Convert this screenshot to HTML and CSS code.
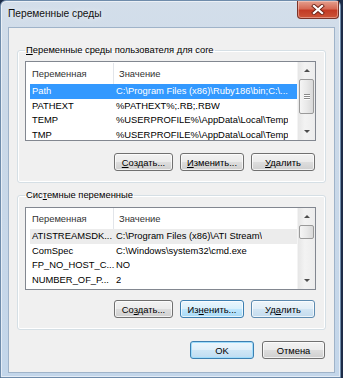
FILE: index.html
```
<!DOCTYPE html>
<html lang="ru">
<head>
    <meta charset="UTF-8">
    <meta name="viewport" content="width=device-width, initial-scale=1.0">
    <link rel="stylesheet" href="styles.css">
    <title>Переменные среды</title>
</head>
<body>

<div class="window">
    <div class="titlebar">
        <span class="title">Переменные среды</span>
        <button class="close" type="button">
            <svg width="14" height="11" viewBox="0 0 14 11">
                <path d="M3 2 L11 9 M11 2 L3 9" stroke="#6a2116" stroke-width="4" stroke-linecap="square"/>
                <path d="M3 2 L11 9 M11 2 L3 9" stroke="#fff" stroke-width="2.3" stroke-linecap="square"/>
            </svg>
        </button>
    </div>

    <div class="client">
        <!-- user variables -->
        <fieldset class="group group-user">
            <legend><u>П</u>еременные среды пользователя для core</legend>
            <div class="list list-user">
                <div class="list-body">
                    <div class="list-head">
                        <span class="col1">Переменная</span>
                        <span class="col2">Значение</span>
                    </div>
                    <div class="row selected"><span class="col1">Path</span><span class="col2">C:\Program Files (x86)\Ruby186\bin;C:\...</span></div>
                    <div class="row"><span class="col1">PATHEXT</span><span class="col2">%PATHEXT%;.RB;.RBW</span></div>
                    <div class="row"><span class="col1">TEMP</span><span class="col2">%USERPROFILE%\AppData\Local\Temp</span></div>
                    <div class="row"><span class="col1">TMP</span><span class="col2">%USERPROFILE%\AppData\Local\Temp</span></div>
                </div>
                <div class="scrollbar">
                    <span class="arrow up"></span>
                    <div class="track"><div class="thumb thumb-user"><i></i><i></i><i></i></div></div>
                    <span class="arrow down"></span>
                </div>
            </div>
            <div class="actions">
                <button class="btn btn-new" type="button"><u>С</u>оздать...</button>
                <button class="btn btn-edit" type="button"><u>И</u>зменить...</button>
                <button class="btn btn-del" type="button"><u>У</u>далить</button>
            </div>
        </fieldset>

        <!-- system variables -->
        <fieldset class="group group-sys">
            <legend>Сис<u>т</u>емные переменные</legend>
            <div class="list list-sys">
                <div class="list-body">
                    <div class="list-head">
                        <span class="col1">Переменная</span>
                        <span class="col2">Значение</span>
                    </div>
                    <div class="row inactive"><span class="col1">ATISTREAMSDK...</span><span class="col2">C:\Program Files (x86)\ATI Stream\</span></div>
                    <div class="row"><span class="col1">ComSpec</span><span class="col2">C:\Windows\system32\cmd.exe</span></div>
                    <div class="row"><span class="col1">FP_NO_HOST_C...</span><span class="col2">NO</span></div>
                    <div class="row"><span class="col1">NUMBER_OF_P...</span><span class="col2">2</span></div>
                </div>
                <div class="scrollbar">
                    <span class="arrow up"></span>
                    <div class="track"><div class="thumb thumb-sys"></div></div>
                    <span class="arrow down"></span>
                </div>
            </div>
            <div class="actions">
                <button class="btn btn-new" type="button">Со<u>з</u>дать...</button>
                <button class="btn btn-edit hover" type="button">Из<u>н</u>енить...</button>
                <button class="btn btn-del fading" type="button">Уд<u>а</u>лить</button>
            </div>
        </fieldset>

        <div class="dialog-actions">
            <button class="btn btn-ok default" type="button">OK</button>
            <button class="btn btn-cancel" type="button">Отмена</button>
        </div>
    </div>
</div>

</body>
</html>
```

FILE: styles.css
```
body {
    margin: 0;
    background-color: #1d2c48;
    font-family: 'Liberation Sans', Arial, sans-serif;
    font-size: 9.4px;
    color: #000;
}

.window {
    width: 339px;
    height: 376px;
    border: 1px solid #6f8cab;
    border-radius: 6px 6px 0 0;
    background: linear-gradient(180deg, #d3deea 0%, #cbd9e8 30%, #c3d6ea 100%);
    box-shadow: inset 0 0 0 1px rgba(255, 255, 255, 0.55);
    display: flex;
    flex-direction: column;
}

.titlebar {
    height: 26px;
    display: flex;
    align-items: flex-start;
    justify-content: space-between;
}

.title {
    font-size: 10.2px;
    color: #111;
    padding: 7px 0 0 7px;
    text-shadow: 0 0 6px rgba(255, 255, 255, 0.9);
}

.close {
    width: 42px;
    height: 18px;
    margin: 0 1px 0 0;
    padding: 0;
    border: 1px solid #7a3328;
    border-top: none;
    border-radius: 0 0 4px 4px;
    background: linear-gradient(180deg, #e4a08f 0%, #d66a55 45%, #c33b25 55%, #cc5538 100%);
    box-shadow: inset 0 0 0 1px rgba(255, 220, 210, 0.45);
    display: flex;
    align-items: center;
    justify-content: center;
}

.client {
    width: 327px;
    height: 346px;
    margin: 0 4px 0 7px;
    border: 1px solid #9fb3c9;
    background-color: #f0f0f0;
    padding: 14px 8px 0 8px;
    box-sizing: border-box;
}

.group {
    margin: 0;
    border: 1px solid #d5dfe5;
    border-radius: 3px;
    box-shadow: inset 0 0 0 1px #fff;
    padding: 3px 9px 11px 7px;
}

.group legend {
    padding: 0 1px;
    margin-left: 0;
    line-height: 16px;
}

.group-sys {
    margin-top: 4px;
    padding-top: 4px;
}

u {
    text-decoration-thickness: 1px;
    text-underline-offset: 1px;
}

.list {
    background-color: #fff;
    border: 1px solid #828790;
    display: flex;
    overflow: hidden;
}

.list-user {
    height: 78px;
}

.list-sys {
    height: 81px;
}

.list-body {
    flex: 1;
    min-width: 0;
}

.list-head {
    height: 22px;
    display: flex;
    align-items: center;
    color: #333;
}

.list-sys .list-head {
    height: 21px;
}

.list-head .col1 {
    border-right: 1px solid #e2e5ea;
}

.col1 {
    width: 81px;
    padding-left: 6px;
    flex-shrink: 0;
    white-space: nowrap;
}

.col2 {
    padding-left: 5px;
    white-space: nowrap;
    overflow: hidden;
}

.list-head .col1,
.list-head .col2 {
    line-height: 21px;
}

.row {
    height: 14.7px;
    line-height: 14.7px;
    margin-left: 4px;
    display: flex;
}

.row .col1 {
    width: 82px;
    padding-left: 2px;
}

.row .col2 {
    padding-left: 2px;
}

.row.selected {
    background-color: #3399ff;
    color: #fff;
}

.row.inactive {
    background-color: #ececec;
}

.scrollbar {
    width: 17px;
    flex-shrink: 0;
    background: linear-gradient(90deg, #e6e6e6, #f3f3f3 40%, #ececec);
    border-left: 1px solid #f4f4f4;
    display: flex;
    flex-direction: column;
}

.arrow {
    height: 17px;
    display: flex;
    align-items: center;
    justify-content: center;
}

.arrow::before {
    content: "";
    border-left: 3px solid transparent;
    border-right: 3px solid transparent;
}

.arrow.up::before {
    border-bottom: 3px solid #4d4d4d;
}

.arrow.down::before {
    border-top: 3px solid #4d4d4d;
}

.track {
    flex: 1;
}

.thumb {
    margin: 0 1px;
    border: 1px solid #9a9a9a;
    border-radius: 2px;
    background: linear-gradient(90deg, #f5f5f5, #e9e9e9 50%, #d9d9d9);
    display: flex;
    flex-direction: column;
    align-items: center;
    justify-content: center;
    gap: 1px;
    box-sizing: border-box;
}

.thumb-user {
    height: 35px;
}

.thumb-sys {
    height: 14px;
}

.thumb i {
    width: 6px;
    height: 1px;
    background-color: #8a8a8a;
    box-shadow: 0 1px 0 #fff;
}

.actions,
.dialog-actions {
    display: flex;
    justify-content: flex-end;
    gap: 7px;
}

.actions {
    margin-top: 12px;
    padding-right: 1px;
}

.group-sys .actions {
    margin-top: 10px;
}

.dialog-actions {
    margin-top: 11px;
    padding-right: 1px;
    gap: 8px;
}

.btn {
    height: 18px;
    padding: 0;
    font-family: inherit;
    font-size: 9.4px;
    color: #000;
    border: 1px solid #707070;
    border-radius: 3px;
    background: linear-gradient(180deg, #f2f2f2 0%, #ebebeb 48%, #dddddd 52%, #cfcfcf 100%);
    box-shadow: inset 0 0 0 1px rgba(255, 255, 255, 0.7);
    cursor: pointer;
}

.btn-new { width: 59px; }
.btn-edit { width: 64px; }
.btn-del { width: 64px; }
.btn-ok { width: 64px; }
.btn-cancel { width: 63px; }

.btn.hover {
    border-color: #3c7fb1;
    background: linear-gradient(180deg, #eaf6fd 0%, #d9f0fc 48%, #bee6fd 52%, #a7d9f5 100%);
}

.btn.fading {
    border-color: #5d8bb0;
    background: linear-gradient(180deg, #eef5fa 0%, #e2eef7 48%, #d2e5f3 52%, #c3dbee 100%);
}

.btn.default {
    border-color: #3c7fb1;
    background: linear-gradient(180deg, #edf6fc 0%, #e0eff9 48%, #cfe6f6 52%, #bfdcf1 100%);
    box-shadow: inset 0 0 0 1px #9fdcfb;
}
```
